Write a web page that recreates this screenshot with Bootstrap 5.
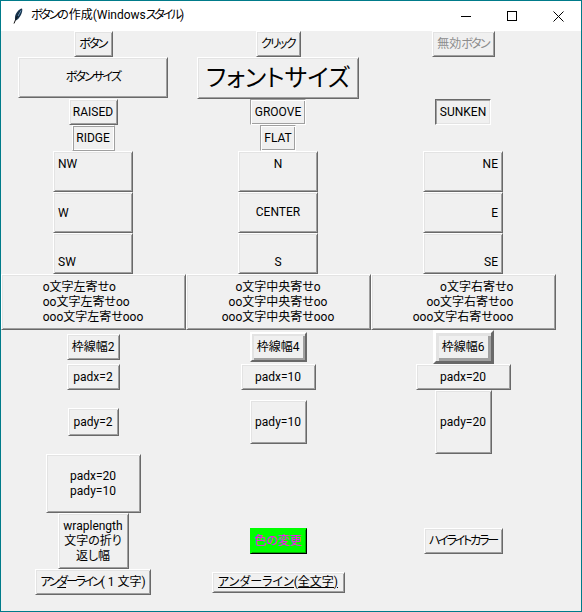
<!DOCTYPE html>
<html lang="ja">
<head>
<meta charset="utf-8">
<title>ボタンの作成(Windowsスタイル)</title>
<link href="https://cdn.jsdelivr.net/npm/bootstrap@5.3.0/dist/css/bootstrap.min.css" rel="stylesheet">
<style>
html,body{height:100%;overflow:hidden;background:#f0f0f0}
body{font-family:Roboto,"Noto Sans CJK JP",sans-serif;font-size:12px;line-height:15px;color:#000;font-feature-settings:"palt"}
.tkwin{width:582px;height:612px;border:1px solid #007b8a;background:#f0f0f0;overflow:hidden}
.tkbar{height:30px;background:#fff;padding-left:12px}
.tkbar svg{display:block}
.tktitle{margin-left:8px;margin-top:-1px}
.tkctl{width:46px;height:30px}
.tkgrid{display:grid;width:555px;margin-left:-.5px;grid-template-columns:185px 185px 185px;
 grid-template-rows:26px 42px 26px 26px 41px 41px 41px 56px 34px 26px 64px 59px 56px 26px;
 justify-items:center;align-items:center}
.btn.tkb{display:flex;align-items:center;justify-content:center;font-feature-settings:"palt";
 padding:0 4px;border-radius:0;font-size:12px;line-height:15px;color:#000;background:#f0f0f0;white-space:nowrap;
 border:1px solid;border-color:#fff #696969 #696969 #fff;box-shadow:inset 1px 1px 0 #e3e3e3,inset -1px -1px 0 #a0a0a0;height:26px;opacity:1}
.btn.tkb:disabled{color:#8c8c8c;background:#f0f0f0;border-color:#fff #696969 #696969 #fff;opacity:1}
.btn.t-groove,.btn.t-flat{border-color:#a0a0a0 #fff #fff #a0a0a0;box-shadow:inset 1px 1px 0 #fff,inset -1px -1px 0 #a0a0a0}
.btn.t-ridge{border-color:#fff #a0a0a0 #a0a0a0 #fff;box-shadow:inset 1px 1px 0 #a0a0a0,inset -1px -1px 0 #fff}
.btn.t-sunken{border-color:#696969 #fff #fff #696969;box-shadow:inset 1px 1px 0 #a0a0a0,inset -1px -1px 0 #e3e3e3}
.btn.t-bd4{height:30px;border-width:2px;box-shadow:inset 2px 2px 0 #e3e3e3,inset -2px -2px 0 #a0a0a0}
.btn.t-bd6{height:34px;border-width:3px;box-shadow:inset 3px 3px 0 #e3e3e3,inset -3px -3px 0 #a0a0a0}
.btn.t-color{background:#0f0;color:#f0f;border-color:#0f0 #000 #000 #0f0;box-shadow:inset 1px 1px 0 #0f0,inset -1px -1px 0 #0a0}
.tkwide{width:185px}
.btn.tkanchor{width:80px;height:41px}
.btn.a-nw,.btn.a-n,.btn.a-ne{align-items:flex-start;padding-top:5px}
.btn.a-sw,.btn.a-s,.btn.a-se{align-items:flex-end;padding-bottom:3px}
.btn.a-w,.btn.a-e{padding-top:2px}
.btn.a-nw,.btn.a-w,.btn.a-sw{justify-content:flex-start}
.btn.a-ne,.btn.a-e,.btn.a-se{justify-content:flex-end}
.tkblock{display:inline-block}
.tk-l{text-align:left}.tk-c{text-align:center}.tk-r{text-align:right}
.w39{width:39px}.w45{width:45px}.w63{width:63px}.w150{width:150px}.w162{width:162px}
.w49{width:49px}.w56{width:56px}.w43{width:43px}.w36{width:36px}.w53{width:53px}.w57{width:57px}
.w61{width:61px}.w75{width:75px}.w95{width:95px}.w51{width:51px}.w71{width:71px}.w79{width:79px}
.w116{width:116px}.w133{width:133px}
.btn.h41{height:41px}.btn.h42{height:42px}.btn.h28{height:28px}.btn.h44{height:44px}.btn.h64{height:64px}
.btn.h59{height:59px}.btn.h56{height:56px}.btn.h21{height:21px}
.btn.tkbig{font-size:24px}
.tkself-start{align-self:start}
.tkul{text-decoration:underline}
.tkkana{letter-spacing:-1.8px}
.tkkana2{letter-spacing:-2.2px}
</style>
</head>
<body>
<div class="tkwin d-flex flex-column">
  <div class="tkbar d-flex align-items-center">
    <svg width="10" height="16" viewBox="0 0 10 16"><path d="M9 .5C6 1 2.5 5 2 9 1.8 10.5 2 12 2.5 12.5 5 12 8 8 9 4 9.4 2.5 9.4 1.2 9 .5Z" fill="#16344f"/><path d="M7.5 3C5.5 6 3 10 1 15.5" fill="none" stroke="#111" stroke-width="1"/><path d="M8 2.5 5 8" stroke="#7fb2d8" stroke-width=".8" fill="none"/></svg>
    <span class="tktitle"><span class="tkkana2">ボタン</span>の作成(Windows<span class="tkkana2">スタイル</span>)</span>
    <div class="ms-auto d-flex">
      <div class="tkctl d-flex align-items-center justify-content-center"><svg width="10" height="10" viewBox="0 0 10 10"><path d="M0 5.5H10" stroke="#000"/></svg></div>
      <div class="tkctl d-flex align-items-center justify-content-center"><svg width="10" height="10" viewBox="0 0 10 10"><rect x=".5" y=".5" width="9" height="9" fill="none" stroke="#000"/></svg></div>
      <div class="tkctl d-flex align-items-center justify-content-center"><svg width="11" height="11" viewBox="0 0 11 11"><path d="M.5 .5 10.5 10.5M10.5 .5 .5 10.5" stroke="#000"/></svg></div>
    </div>
  </div>
  <div class="tkgrid">
    <button class="btn tkb w39"><span class="tkkana">ボタン</span></button>
    <button class="btn tkb w45"><span class="tkkana">クリック</span></button>
    <button class="btn tkb w63" disabled><span>無効<span class="tkkana">ボタン</span></span></button>

    <button class="btn tkb w150 h41 tkself-start"><span class="tkkana">ボタンサイズ</span></button>
    <button class="btn tkb w162 h42 tkbig">フォントサイズ</button>
    <div></div>

    <button class="btn tkb w49">RAISED</button>
    <button class="btn tkb t-groove w56">GROOVE</button>
    <button class="btn tkb t-sunken w56">SUNKEN</button>

    <button class="btn tkb t-ridge w43">RIDGE</button>
    <button class="btn tkb t-flat w36">FLAT</button>
    <div></div>

    <button class="btn tkb tkanchor a-nw">NW</button>
    <button class="btn tkb tkanchor a-n">N</button>
    <button class="btn tkb tkanchor a-ne">NE</button>
    <button class="btn tkb tkanchor a-w">W</button>
    <button class="btn tkb tkanchor a-c">CENTER</button>
    <button class="btn tkb tkanchor a-e">E</button>
    <button class="btn tkb tkanchor a-sw">SW</button>
    <button class="btn tkb tkanchor a-s">S</button>
    <button class="btn tkb tkanchor a-se">SE</button>

    <button class="btn tkb tkwide h56"><span class="tkblock tk-l">o文字左寄せo<br>oo文字左寄せoo<br>ooo文字左寄せooo</span></button>
    <button class="btn tkb tkwide h56"><span class="tkblock tk-c">o文字中央寄せo<br>oo文字中央寄せoo<br>ooo文字中央寄せooo</span></button>
    <button class="btn tkb tkwide h56"><span class="tkblock tk-r">o文字右寄せo<br>oo文字右寄せoo<br>ooo文字右寄せooo</span></button>

    <button class="btn tkb w53">枠線幅2</button>
    <button class="btn tkb t-bd4 w57">枠線幅4</button>
    <button class="btn tkb t-bd6 w61">枠線幅6</button>

    <button class="btn tkb w53">padx=2</button>
    <button class="btn tkb w75">padx=10</button>
    <button class="btn tkb w95">padx=20</button>

    <button class="btn tkb w51 h28">pady=2</button>
    <button class="btn tkb w57 h44">pady=10</button>
    <button class="btn tkb w57 h64">pady=20</button>

    <button class="btn tkb w95 h59">padx=20<br>pady=10</button>
    <div></div>
    <div></div>

    <button class="btn tkb w71 h56 text-center">wraplength<br>文字の折り<br>返し幅</button>
    <button class="btn tkb t-color w57">色の変更</button>
    <button class="btn tkb w79"><span class="tkkana2">ハイライトカラー</span></button>

    <button class="btn tkb w116"><span><span class="tkkana2">アン<span class="tkul">ダ</span>ーライン</span>( 1 文字)</span></button>
    <button class="btn tkb w133 h21"><span class="tkul">アンダーライン(全文字)</span></button>
    <div></div>
  </div>
</div>
<script src="https://cdn.jsdelivr.net/npm/bootstrap@5.3.0/dist/js/bootstrap.bundle.min.js"></script>
</body>
</html>
